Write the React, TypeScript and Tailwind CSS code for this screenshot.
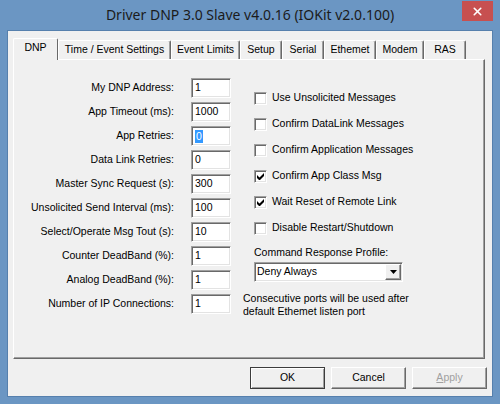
import { X } from "lucide-react"

type Field = { label: string; value: string; selected?: boolean }

const fields: Field[] = [
  { label: "My DNP Address:", value: "1" },
  { label: "App Timeout (ms):", value: "1000" },
  { label: "App Retries:", value: "0", selected: true },
  { label: "Data Link Retries:", value: "0" },
  { label: "Master Sync Request (s):", value: "300" },
  { label: "Unsolicited Send Interval (ms):", value: "100" },
  { label: "Select/Operate Msg Tout (s):", value: "10" },
  { label: "Counter DeadBand (%):", value: "1" },
  { label: "Analog DeadBand (%):", value: "1" },
  { label: "Number of IP Connections:", value: "1" },
]

const checks = [
  { label: "Use Unsolicited Messages", checked: false },
  { label: "Confirm DataLink Messages", checked: false },
  { label: "Confirm Application Messages", checked: false },
  { label: "Confirm App Class Msg", checked: true },
  { label: "Wait Reset of Remote Link", checked: true },
  { label: "Disable Restart/Shutdown", checked: false },
]

const tabs = [
  { label: "Time / Event Settings", w: "w-[113px]" },
  { label: "Event Limits", w: "w-[69px]" },
  { label: "Setup", w: "w-[42px]" },
  { label: "Serial", w: "w-[42px]" },
  { label: "Ethemet", w: "w-[52px]" },
  { label: "Modem", w: "w-[48px]" },
  { label: "RAS", w: "w-[42px]" },
]

const sunken =
  "border border-t-[#a0a0a0] border-l-[#a0a0a0] border-b-white border-r-white shadow-[inset_1px_1px_0_#696969,inset_-1px_-1px_0_#e3e3e3]"

const raised =
  "border border-t-white border-l-white border-b-[#696969] border-r-[#696969] shadow-[inset_-1px_-1px_0_#a0a0a0]"

function CheckBox({ checked }: { checked: boolean }) {
  return (
    <div className={`flex h-[13px] w-[13px] shrink-0 items-center justify-center bg-white ${sunken}`}>
      {checked && (
        <svg width="7" height="7" viewBox="0 0 7 7">
          <path d="M0 2v3l2 2h1l4-4V0L2.5 4.5z" fill="#000" />
        </svg>
      )}
    </div>
  )
}

export default function App() {
  return (
    <div className="flex h-[404px] w-[500px] flex-col bg-[#6b96c3] font-['Liberation_Sans',Arial,sans-serif] text-[10.5px] text-black">
      <div className="grid h-[30px] shrink-0 grid-cols-[1fr_auto_1fr]">
        <div />
        <div className="self-center pb-px font-['Noto_Sans',sans-serif] text-[14px] text-[#1b1b1b]">
          Driver DNP 3.0 Slave v4.0.16 (IOKit v2.0.100)
        </div>
        <div className="mr-[7px] mt-px flex h-[20px] w-[31px] items-center justify-center justify-self-end bg-[#c75050]">
          <X className="h-[13px] w-[13px] text-white" strokeWidth={3} />
        </div>
      </div>

      <div className="mx-[7px] mb-[7px] flex flex-1 flex-col border border-[#5680ad] bg-[#f0f0f0] px-[5px] pt-[7px]">
        <div className="flex h-[21px] items-end whitespace-nowrap text-[10.5px]">
          <div className="relative z-10 -mb-px flex h-[22px] w-[45px] items-center justify-center rounded-t-[2px] border-l border-t border-r border-l-white border-t-white border-r-[#696969] bg-[#f0f0f0] pb-[3px]">
            DNP
          </div>
          {tabs.map((t) => (
            <div
              key={t.label}
              className={`flex h-[19px] ${t.w} items-center justify-center rounded-t-[2px] border-l border-t border-r border-l-white border-t-white border-r-[#696969] shadow-[inset_-1px_0_0_#a0a0a0]`}
            >
              {t.label}
            </div>
          ))}
        </div>

        <div className={`flex h-[300px] w-[472px] ${raised} shadow-[inset_-1px_-1px_0_#a0a0a0]`}>
          <div className="flex flex-col gap-[4px] pt-[18px]">
            {fields.map((f) => (
              <div key={f.label} className="flex h-[20px] items-center">
                <div className="w-[160px] text-right">{f.label}</div>
                <div className={`ml-[17px] flex h-[20px] w-[40px] items-center bg-white pl-[3px] ${sunken}`}>
                  {f.selected ? (
                    <span className="bg-[#3399ff] px-px leading-[13px] text-white">{f.value}</span>
                  ) : (
                    <span>{f.value}</span>
                  )}
                </div>
              </div>
            ))}
          </div>

          <div className="ml-[23px] flex flex-col pt-[25px]">
            {checks.map((c) => (
              <div key={c.label} className="flex h-[26px] items-center gap-[5px]">
                <CheckBox checked={c.checked} />
                <span>{c.label}</span>
              </div>
            ))}
            <div className="mt-[4px] leading-[14px]">Command Response Profile:</div>
            <div className={`mt-[3px] flex h-[20px] w-[149px] items-center bg-white ${sunken}`}>
              <span className="flex-1 pl-[2px]">Deny Always</span>
              <div className={`mr-px flex h-[16px] w-[16px] items-center justify-center bg-[#f0f0f0] ${raised}`}>
                <svg width="7" height="4" viewBox="0 0 7 4">
                  <path d="M0 0h7L3.5 4z" fill="#000" />
                </svg>
              </div>
            </div>
            <div className="-ml-[11px] mt-[10px] leading-[13px]">
              Consecutive ports will be used after
              <br />
              default Ethemet listen port
            </div>
          </div>
        </div>

        <div className="mt-[8px] flex justify-end gap-[6px]">
          <div className="flex h-[22px] w-[75px] items-center justify-center border border-[#3c3c3c] bg-[#f0f0f0] shadow-[inset_1px_1px_0_#fff,inset_-1px_-1px_0_#a0a0a0]">
            OK
          </div>
          <div className={`flex h-[22px] w-[75px] items-center justify-center bg-[#f0f0f0] ${raised}`}>
            Cancel
          </div>
          <div className={`flex h-[22px] w-[75px] items-center justify-center bg-[#f0f0f0] text-[#a0a0a0] ${raised}`}>
            <span>
              <span className="underline">A</span>pply
            </span>
          </div>
        </div>
      </div>
    </div>
  )
}
